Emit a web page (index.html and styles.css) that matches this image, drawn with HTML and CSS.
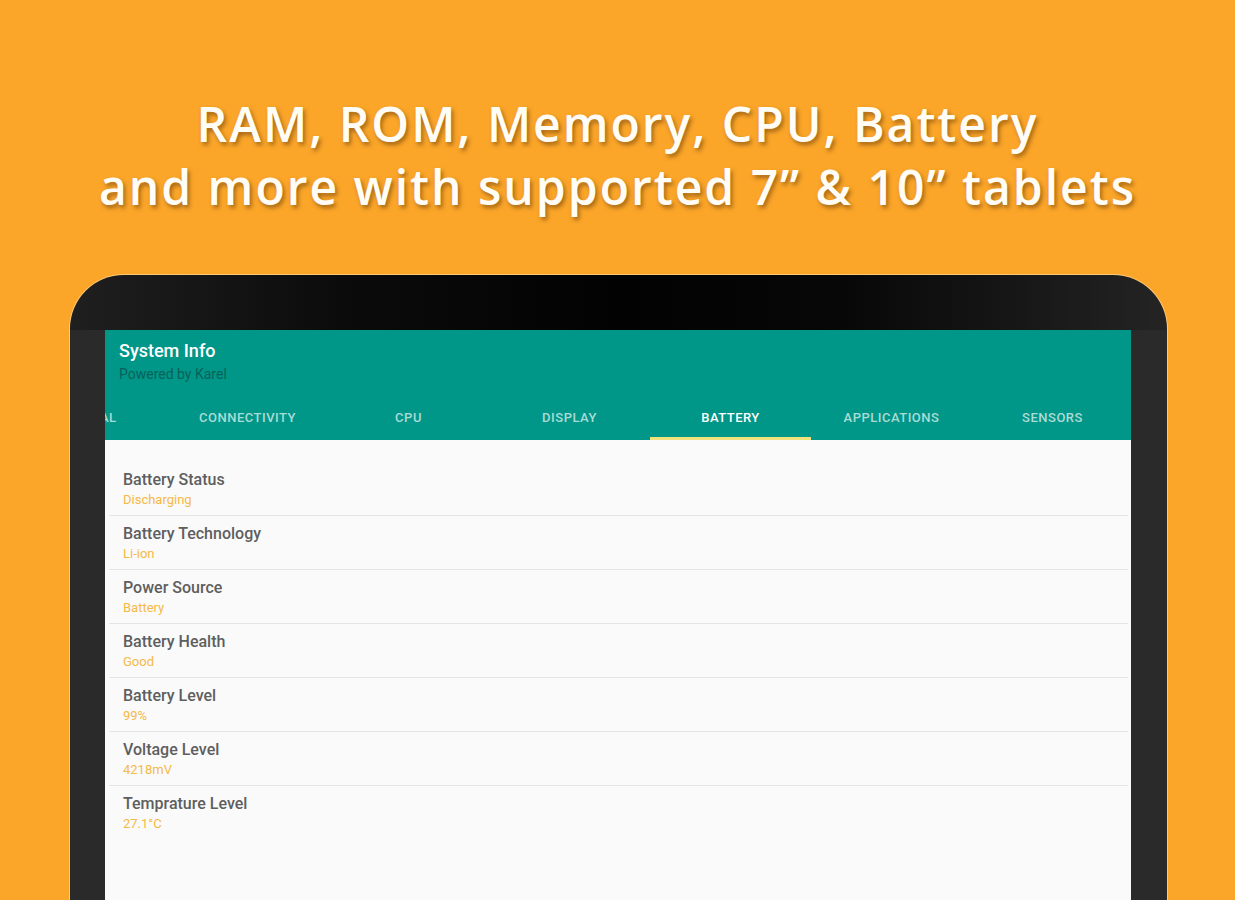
FILE: index.html
```html
<!DOCTYPE html>
<html>
<head>
<meta charset="utf-8">
<title>System Info</title>
<link rel="stylesheet" href="styles.css">
</head>
<body>
<div class="page">
  <h1 class="headline">RAM, ROM, Memory, CPU, Battery<br>and more with supported 7” &amp; 10” tablets</h1>
  <div class="tablet">
    <div class="screen">
      <div class="appbar">
        <div class="titles">
          <div class="app-title">System Info</div>
          <div class="app-sub">Powered by Karel</div>
        </div>
        <div class="tabs">
          <div class="tab">General</div>
          <div class="tab">Connectivity</div>
          <div class="tab">CPU</div>
          <div class="tab">Display</div>
          <div class="tab active">Battery</div>
          <div class="tab">Applications</div>
          <div class="tab">Sensors</div>
        </div>
      </div>
      <div class="list">
        <div class="row"><div class="label">Battery Status</div><div class="value">Discharging</div></div>
        <div class="row"><div class="label">Battery Technology</div><div class="value">Li-ion</div></div>
        <div class="row"><div class="label">Power Source</div><div class="value">Battery</div></div>
        <div class="row"><div class="label">Battery Health</div><div class="value">Good</div></div>
        <div class="row"><div class="label">Battery Level</div><div class="value">99%</div></div>
        <div class="row"><div class="label">Voltage Level</div><div class="value">4218mV</div></div>
        <div class="row last"><div class="label">Temprature Level</div><div class="value">27.1°C</div></div>
      </div>
    </div>
  </div>
</div>
</body>
</html>
```
FILE: styles.css
```css
html, body {
  margin: 0;
  padding: 0;
}
body {
  width: 1235px;
  height: 900px;
  overflow: hidden;
  background: #fba629;
  font-family: Roboto, "Noto Sans", sans-serif;
}
.page {
  display: flex;
  flex-direction: column;
  height: 900px;
}
.headline {
  margin: 92px 0 0 0;
  text-align: center;
  font-family: "Open Sans", "DejaVu Sans", sans-serif;
  font-weight: 600;
  font-size: 48px;
  line-height: 63px;
  letter-spacing: 2px;
  color: #fffdf6;
  text-shadow: 2px 3px 4px rgba(80, 40, 0, 0.5);
}
.tablet {
  margin: 57px 0 0 70px;
  width: 1097px;
  box-sizing: border-box;
  flex: 1;
  padding: 55px 36px 0 35px;
  border-radius: 54px 54px 0 0;
  background:
    linear-gradient(90deg, #1f1f1f 0%, #0b0b0b 25%, #020202 50%, #070707 70%, #242424 100%) top / 100% 55px no-repeat,
    #2a2a2a;
  box-shadow: 0 0 0 1px rgba(255, 225, 170, 0.6);
  display: flex;
}
.screen {
  flex: 1;
  display: flex;
  flex-direction: column;
  background: #fafafa;
  overflow: hidden;
}
.appbar {
  background: #009688;
  height: 110px;
  display: flex;
  flex-direction: column;
  overflow: hidden;
}
.titles {
  padding: 9px 0 0 14px;
}
.app-title {
  color: #ffffff;
  font-size: 18px;
  line-height: 24px;
  font-weight: 500;
}
.app-sub {
  margin-top: 1px;
  color: #0a6259;
  font-size: 14px;
  line-height: 20px;
}
.tabs {
  margin-top: 8px;
  margin-left: -99px;
  display: flex;
  height: 48px;
}
.tab {
  flex: 0 0 161px;
  box-sizing: border-box;
  display: flex;
  align-items: center;
  justify-content: center;
  text-transform: uppercase;
  font-size: 13px;
  font-weight: 500;
  letter-spacing: 0.5px;
  color: #a9dcd6;
  padding-top: 2px;
}
.tab.active {
  color: #ffffff;
  border-bottom: 3px solid #f2e27c;
  padding-top: 5px;
}
.list {
  flex: 1;
  padding-top: 22px;
}
.row {
  margin: 0 3px 0 4px;
  padding: 8px 14px 5px;
  border-bottom: 1px solid #e4e4e4;
}
.row.last {
  border-bottom: none;
}
.label {
  font-size: 16px;
  line-height: 20px;
  font-weight: 500;
  color: #5e5e5e;
}
.value {
  font-size: 13px;
  line-height: 20px;
  color: #f5b947;
}
```
